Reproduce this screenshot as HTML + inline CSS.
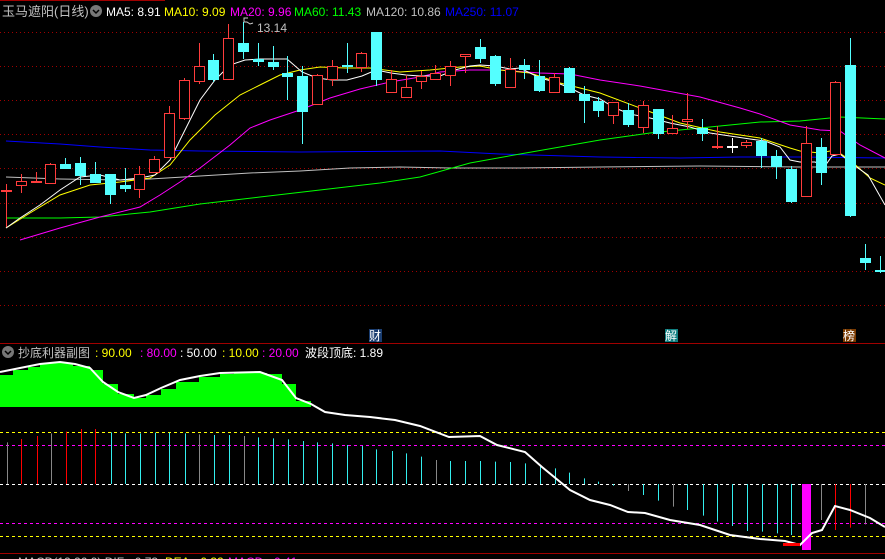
<!DOCTYPE html>
<html><head><meta charset="utf-8"><style>
body{margin:0;background:#000;width:885px;height:559px;overflow:hidden;font-family:"Liberation Sans","Noto Sans CJK SC",sans-serif}
svg{position:absolute;left:0;top:0}
</style></head><body>
<svg id="s" width="885" height="559" xmlns="http://www.w3.org/2000/svg" font-family="Liberation Sans, Noto Sans CJK SC, sans-serif">
<rect width="885" height="559" fill="#000"/>
<line x1="0" y1="0.5" x2="165" y2="0.5" stroke="#a00000"/>
<g id="grid" stroke="#a00000" stroke-dasharray="1,3"></g>
<line x1="0" y1="343.5" x2="885" y2="343.5" stroke="#a00000"/>
<line x1="0" y1="553.5" x2="885" y2="553.5" stroke="#a00000"/>
<g id="ma" fill="none" stroke-width="1"></g>
<g id="cd"></g>
<g id="bt"></g>
<text x="2" y="16" fill="#c0c0c0" font-size="13">玉马遮阳(日线)</text>
<circle cx="96" cy="11" r="6" fill="#777"/><path d="M93 10l3 3 3-3" stroke="#000" stroke-width="1.5" fill="none"/>
<text y="16" font-size="12"><tspan x="106" fill="#fff">MA5: 8.91</tspan><tspan x="164" fill="#ff0">MA10: 9.09</tspan><tspan x="230" fill="#f0f">MA20: 9.96</tspan><tspan x="294" fill="#0f0">MA60: 11.43</tspan><tspan x="366" fill="#c0c0c0">MA120: 10.86</tspan><tspan x="445" fill="#00f">MA250: 11.07</tspan></text>
<path d="M244 22v-4h4M244 22l3 0 3 2 3-1" stroke="#ccc" fill="none"/>
<text x="257" y="32" fill="#c0c0c0" font-size="12">13.14</text>
<rect x="369" y="329" width="13" height="13" fill="#1a3d70"/><text x="369" y="340" fill="#fff" font-size="12">财</text>
<rect x="665" y="329" width="13" height="13" fill="#107f80"/><text x="665" y="340" fill="#fff" font-size="12">解</text>
<rect x="843" y="329" width="13" height="13" fill="#7a3a00"/><text x="843" y="340" fill="#fff" font-size="12">榜</text>
<circle cx="8" cy="352" r="6" fill="#777"/><path d="M5 351l3 3 3-3" stroke="#000" stroke-width="1.5" fill="none"/>
<text y="357" font-size="12"><tspan x="18" fill="#c0c0c0">抄底利器副图</tspan><tspan x="95" fill="#ff0">: 90.00</tspan><tspan x="140" fill="#f0f">: 80.00</tspan><tspan x="180" fill="#fff">: 50.00</tspan><tspan x="222" fill="#ff0">: 10.00</tspan><tspan x="262" fill="#f0f">: 20.00</tspan><tspan x="305" fill="#fff">波段顶底: 1.89</tspan></text>
<text y="566" font-size="12"><tspan x="18" fill="#c0c0c0">MACD(12,26,9) DIF: -0.73</tspan><tspan x="165" fill="#ff0">DEA: -0.32</tspan><tspan x="228" fill="#f0f">MACD: -0.41</tspan></text>
</svg>
<script>
var NS="http://www.w3.org/2000/svg",s=document.getElementById('s');
function el(p,t,a){var e=document.createElementNS(NS,t);for(var k in a)e.setAttribute(k,a[k]);p.appendChild(e);return e;}
var g=document.getElementById('grid');
[32,66,100,134,168,203,237,271,305].forEach(function(y){el(g,'line',{x1:0,x2:885,y1:y+.5,y2:y+.5});});
var ma=document.getElementById('ma');
function pl(c,p){el(ma,'polyline',{points:p,stroke:c});}
pl('#c0c0c0','6,177 60,179 120,180 150,179 200,176 250,173 300,171 350,168 400,167 450,168 520,168 600,167 700,166 800,167 885,167');
pl('#0000ff','6,141 60,144 100,147 150,150 200,151 300,152 440,151 500,154 600,157 680,158 740,157 800,157 885,158');
pl('#00ff00','6,218 60,218 100,217 150,212 200,204 260,197 320,190 380,183 420,177 470,163 520,154 560,147 600,140 650,133 700,128 760,122 800,121 840,117 885,119');
pl('#ff00ff','20,240 60,228 100,217 140,207 160,195 180,182 200,168 230,145 250,128 270,120 300,110 330,98 360,89 390,82 420,77 440,72 470,70 500,70 540,73 570,74 600,80 640,86 700,97 740,108 760,114 790,125 820,130 840,131 860,145 885,158');
pl('#ffff00','6,228 30,213 60,195 90,185 120,182 150,178 170,165 190,140 215,115 240,95 260,85 280,75 300,70 320,67 345,68 370,68 400,72 430,70 460,67 480,66 500,70 530,73 560,83 600,93 640,108 680,123 720,132 760,138 790,148 800,151 820,153 835,150 850,160 870,178 885,185');
pl('#ffffff','6,228 20,218 40,205 60,190 80,177 100,175 120,180 140,178 155,175 170,160 185,130 200,100 215,80 230,65 245,60 260,59 287,59 302,72 317,78 332,80 347,80 362,76 376,70 391,73 406,75 420,76 440,76 455,70 470,66 480,65 495,66 510,69 520,68 540,78 555,82 570,88 584,95 600,99 615,108 630,114 650,118 670,123 690,127 710,133 730,136 750,139 765,141 780,147 790,160 800,162 815,162 825,166 832,156 840,154 855,166 868,175 885,205');
// candles: x, color r/c/w, bodyTop, bodyBot, high, low
var C=[[6,'r',190,191,184,227],[21,'r',181,185,174,193],[36,'r',181,182,172,183],[50,'r',164,183,163,183],[65,'c',164,168,158,168],[80,'c',163,175,157,185],[95,'c',174,182,162,182],[110,'c',174,194,174,204],[125,'c',185,188,168,192],[139,'r',174,189,166,198],[154,'r',159,172,156,172],[169,'r',113,157,106,157],[184,'r',80,118,78,120],[199,'r',66,81,43,84],[213,'c',60,79,54,82],[228,'r',38,79,24,79],[243,'c',43,51,22,59],[258,'c',59,61,43,66],[273,'c',62,66,46,70],[287,'c',73,76,56,100],[302,'c',76,111,66,144],[317,'r',75,104,74,104],[332,'r',66,79,60,86],[347,'c',65,66,43,73],[361,'r',53,67,52,72],[376,'c',32,79,32,86],[391,'r',79,92,70,92],[406,'r',87,97,75,97],[421,'r',76,81,71,89],[435,'r',73,79,65,79],[450,'r',66,75,61,86],[465,'r',54,56,54,73],[480,'c',47,58,39,63],[495,'c',56,83,55,86],[510,'r',69,87,58,87],[524,'c',65,69,59,79],[539,'c',76,90,60,92],[554,'r',77,92,73,92],[569,'c',68,92,67,92],[584,'c',94,100,86,123],[598,'c',101,110,97,117],[613,'r',102,115,102,124],[628,'c',110,124,103,127],[643,'r',105,127,101,133],[658,'c',109,133,109,139],[672,'r',128,133,115,133],[687,'r',119,121,93,129],[702,'c',128,133,119,141],[717,'r',146,147,126,149],[732,'w',146,147,138,153],[746,'r',142,145,140,148],[761,'c',141,155,138,168],[776,'c',156,166,150,179],[791,'c',169,201,166,203],[806,'r',143,196,126,197],[821,'c',147,172,138,185],[835,'r',82,154,81,154],[850,'c',65,215,38,217],[865,'c',258,262,244,270],[880,'c',270,271,256,273]];
var cd=document.getElementById('cd');
C.forEach(function(c){var col=c[1]=='r'?'#ff3c3c':c[1]=='c'?'#54ffff':'#fff';var x=c[0];
el(cd,'line',{x1:x+.5,x2:x+.5,y1:c[4],y2:c[5],stroke:col});
var h=c[3]-c[2];
if(h<=1){el(cd,'rect',{x:x-5,y:c[2],width:11,height:2,fill:col});}
else if(c[1]=='r'){el(cd,'rect',{x:x-4.5,y:c[2]+.5,width:10,height:h,fill:'#000',stroke:col});}
else el(cd,'rect',{x:x-5,y:c[2],width:11,height:h+1,fill:col});});
// bottom panel
var bt=document.getElementById('bt');
[[432,'#ff0'],[445,'#f0f'],[484,'#fff'],[523,'#f0f'],[536,'#ff0']].forEach(function(l){el(bt,'line',{x1:0,x2:885,y1:l[0]+.5,y2:l[0]+.5,stroke:l[1],'stroke-dasharray':'3,3'});});
var B=[[12,'g',67],[38,'r',57],[65,'r',48],[90,'g',40],[117,'r',35],[143,'r',27],[169,'r',27],[196,'c',37],[222,'c',40],[248,'c',40],[274,'c',38],[300,'c',38],[327,'c',40],[353,'g',43],[379,'c',45],[405,'c',45],[432,'g',48],[458,'c',52],[484,'c',55],[510,'c',58],[537,'c',63],[562,'c',67],[589,'c',70],[615,'c',75],[641,'c',78],[667,'c',88],[694,'c',93],[720,'c',100],[746,'c',110],[772,'g',120],[798,'c',123],[824,'c',123],[850,'c',123],[877,'c',125],[903,'c',126],[930,'c',130],[956,'c',140],[983,'c',145],[1009,'c',158],[1035,'c',175],[1060,'c',185],[1087,'c',197],[1113,'g',213],[1140,'c',225],[1166,'c',242],[1192,'g',260],[1218,'c',270],[1245,'c',287],[1271,'c',305],[1297,'c',318],[1323,'c',333],[1350,'c',335],[1376,'c',340],[1402,'c',345],[1455,'g',300],[1480,'r',330],[1507,'r',323],[1533,'g',313]];
B.forEach(function(b){var x=Math.round(b[0]/1.772)+.5,y=420+b[2]/3;var col=b[1]=='r'?'#f00':b[1]=='c'?'#3ee':'#888';
el(bt,'line',{x1:x,x2:x,y1:484,y2:y,stroke:col});});
el(bt,'rect',{x:802,y:484,width:9,height:66,fill:'#f0f'});
var st=[[0,375],[13,370],[28,367],[40,363],[57,363],[73,366],[90,370],[103,384],[118,394],[134,398],[146,395],[161,389],[176,382],[199,377],[220,374],[234,373],[267,374],[282,384],[296,401],[311,401]];
var d='M0 407';st.forEach(function(p,i){d+=' L'+p[0]+' '+p[1];if(i<st.length-1)d+=' L'+st[i+1][0]+' '+p[1];});d+=' L311 407Z';
el(bt,'path',{d:d,fill:'#00ff00'});
el(bt,'polyline',{points:'0,372 20,368 40,364 60,362 75,364 90,368 103,382 118,392 134,398 146,395 161,388 180,380 200,376 220,373 260,372 282,380 296,398 311,404 325,412 345,415 370,417 395,420 420,426 449,437 480,436 497,445 525,452 542,467 570,490 590,500 610,505 628,512 645,513 670,520 700,525 730,535 760,539 785,541 800,545 812,533 822,530 835,506 850,510 870,518 885,527',fill:'none',stroke:'#fff','stroke-width':2});
el(bt,'rect',{x:783,y:543,width:17,height:3,fill:'#f00'});
</script>
</body></html>
